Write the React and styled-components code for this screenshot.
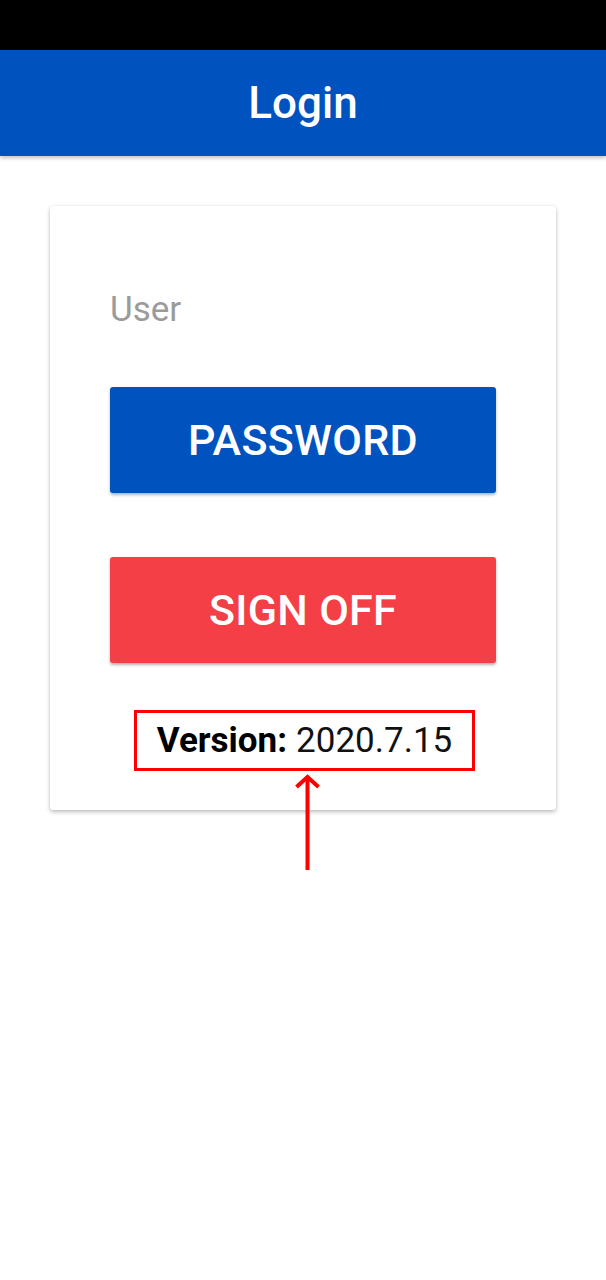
import React from 'react';
import styled, { createGlobalStyle } from 'styled-components';

const GlobalStyle = createGlobalStyle`
  html, body {
    margin: 0;
    padding: 0;
    background: #ffffff;
    font-family: Roboto, "Liberation Sans", sans-serif;
  }
`;

const Page = styled.div`
  min-height: 1280px;
  background: #ffffff;
`;

const StatusBar = styled.div`
  height: 50px;
  background: #000000;
`;

const Header = styled.header`
  height: 106px;
  background: #0052bf;
  display: flex;
  align-items: center;
  justify-content: center;
  box-shadow: 0 2px 4px rgba(0, 0, 0, 0.25);
  position: relative;
  z-index: 1;
`;

const Title = styled.h1`
  margin: 0;
  color: #ffffff;
  font-size: 44px;
  font-weight: 500;
`;

const Card = styled.div`
  position: relative;
  width: 506px;
  box-sizing: border-box;
  margin: 50px 0 0 50px;
  padding: 84px 60px 39px;
  background: #ffffff;
  border-radius: 3px;
  box-shadow: 0 2px 4px rgba(0, 0, 0, 0.25), 0 0 2px rgba(0, 0, 0, 0.08);
  display: flex;
  flex-direction: column;
`;

const UserLabel = styled.div`
  font-size: 35px;
  line-height: 40px;
  color: #9b9b9b;
  margin-bottom: 57px;
`;

const ActionButton = styled.button`
  height: 106px;
  width: 100%;
  border: none;
  border-radius: 3px;
  background: ${p => p.$color};
  color: #ffffff;
  font-family: Roboto, "Liberation Sans", sans-serif;
  font-size: 43px;
  font-weight: 500;
  letter-spacing: 0.3px;
  box-shadow: 0 2px 3px rgba(0, 0, 0, 0.3);
  margin-bottom: ${p => p.$gap}px;
`;

const VersionBox = styled.div`
  align-self: center;
  margin-left: 3px;
  width: 341px;
  height: 61px;
  box-sizing: border-box;
  border: 3px solid #ff0000;
  display: flex;
  align-items: center;
  justify-content: center;
  font-size: 35px;
  color: #111111;
`;

const Bold = styled.strong`
  font-weight: 700;
  color: #000000;
  margin-right: 9px;
`;

const Arrow = styled.svg`
  position: absolute;
  left: 245px;
  top: 568px;
  overflow: visible;
`;

export default function App() {
  return (
    <Page>
      <GlobalStyle />
      <StatusBar />
      <Header>
        <Title>Login</Title>
      </Header>
      <Card>
        <UserLabel>User</UserLabel>
        <ActionButton $color="#0052bf" $gap={64}>PASSWORD</ActionButton>
        <ActionButton $color="#f33f45" $gap={47}>SIGN OFF</ActionButton>
        <VersionBox>
          <Bold>Version:</Bold>2020.7.15
        </VersionBox>
        <Arrow width="24" height="96" viewBox="0 0 24 96">
          <path d="M12.5 3 V96" stroke="#ff0000" strokeWidth="4" fill="none" />
          <path d="M1.5 13 L12.5 3 L23.5 13" stroke="#ff0000" strokeWidth="4" fill="none" />
        </Arrow>
      </Card>
    </Page>
  );
}
